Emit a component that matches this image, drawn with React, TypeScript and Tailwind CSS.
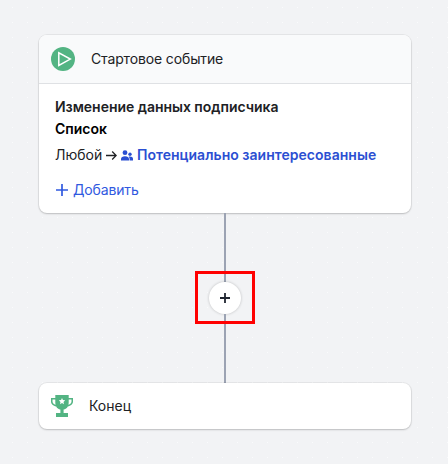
import type { ReactNode } from "react";

const cardClass =
  "w-[372px] shrink-0 overflow-hidden rounded-lg bg-white shadow-[0_0_0_1px_rgba(0,0,0,0.05),0_1px_2px_rgba(0,0,0,0.18)]";

function Card({ children }: { children: ReactNode }) {
  return <section className={cardClass}>{children}</section>;
}

function PlayIcon() {
  return (
    <svg className="size-6 shrink-0" viewBox="0 0 24 24" fill="none">
      <circle cx="12" cy="12" r="12" fill="#53b483" />
      <path d="M7.8 5.8v12.6L19.3 12.1z" stroke="#fff" strokeWidth="1.5" />
    </svg>
  );
}

function TrophyIcon() {
  return (
    <svg className="h-[22px] w-[22px] shrink-0" viewBox="0 0 22 22">
      <path
        fill="#53b483"
        fillRule="evenodd"
        d="M4.3 0h13.4v3H22v3.5c0 2.4-2.2 4.6-5.2 4.9-.9 1.7-2.400 2.700-4.200 3.100V18H17v4H5v-4h4.400v-3.500c-1.800-.4-3.300-1.400-4.200-3.100C2.200 11.100 0 8.900 0 6.500V3h4.300zM1.500 4.500v2c0 1.500 1.200 2.800 3.100 3.300-.2-.8-.3-1.600-.3-2.500V4.500zm19 0h-2.800v2.800c0 .9-.1 1.700-.3 2.500 1.900-.5 3.100-1.800 3.100-3.300z"
      />
      <path fill="#fff" d="m11 3 .95 2.1 2.25.25-1.68 1.53.47 2.25L11 8l-1.990 1.130.47-2.250L7.800 5.350l2.250-.25z" />
    </svg>
  );
}

function PeopleIcon() {
  return (
    <svg className="h-[11px] w-3 shrink-0" viewBox="0 0 12 11" fill="#2b4fd2">
      <circle cx="4" cy="2.7" r="2.4" />
      <circle cx="9" cy="4.2" r="1.7" />
      <path d="M0 10.500V9c0-1.700 1.700-2.700 4-2.700S8 7.300 8 9v1.500z" />
      <path d="M8.600 10.500V9c0-.9-.3-1.700-.9-2.300 2.200-.5 4.300.4 4.300 2v1.800z" />
    </svg>
  );
}

function Arrow() {
  return (
    <svg className="h-[11px] w-[11px] shrink-0" viewBox="0 0 11 11" fill="none" stroke="#202124" strokeWidth="1.3">
      <path d="M0 5.500h10M6.200 1.500l4 4-4 4" />
    </svg>
  );
}

export default function App() {
  return (
    <main className="flex h-[464px] w-[448px] flex-col items-center overflow-hidden bg-[#f2f3f5] bg-[radial-gradient(circle_at_center,#fafbfc_0.8px,transparent_1px)] bg-[length:15px_15px] bg-[position:5px_0px] pt-[35px] pl-0.5 font-['Inter','Liberation_Sans',sans-serif] text-sm text-[#202124]">
      <Card>
        <header className="flex h-[49px] items-center gap-4 border-b border-[#dfe1e4] bg-[#f9fafb] px-3">
          <PlayIcon />
          <span className="tracking-[-0.01em]">Стартовое событие</span>
        </header>
        <div className="flex h-[129px] flex-col px-4 pt-3 leading-[22px]">
          <div className="font-semibold tracking-[-0.002em]">Изменение данных подписчика</div>
          <div className="font-semibold text-black">Список</div>
          <div className="mt-1 flex items-center whitespace-nowrap">
            <span className="w-[50.5px]">Любой</span>
            <Arrow />
            <span className="ml-1 flex items-center gap-[4.5px] font-semibold text-[#2b4fd2]">
              <PeopleIcon />
              <span className="tracking-[0.002em]">Потенциально заинтересованные</span>
            </span>
          </div>
          <div className="mt-[13px] flex items-center gap-[5px] text-[#3059df]">
            <svg className="ml-px size-3" viewBox="0 0 12 12" stroke="currentColor" strokeWidth="1.7">
              <path d="M6 0v12M0 6h12" />
            </svg>
            <span className="tracking-[-0.01em]">Добавить</span>
          </div>
        </div>
      </Card>
      <div className="h-[58px] w-0.5 shrink-0 bg-[#9ca3b3]" />
      <div className="flex h-[53px] w-[60px] shrink-0 flex-col items-center border-[3px] border-[#ff0000]">
        <div className="h-2 w-0.5 shrink-0 bg-[#9ca3b3]" />
        <button className="flex size-8 shrink-0 items-center justify-center rounded-full bg-white shadow-[0_0_3px_rgba(0,0,0,0.22)]">
          <svg className="size-2.5" viewBox="0 0 10 10" stroke="#202631" strokeWidth="1.8">
            <path d="M5 0v10M0 5h10" />
          </svg>
        </button>
        <div className="w-0.5 flex-1 bg-[#9ca3b3]" />
      </div>
      <div className="h-[59px] w-0.5 shrink-0 bg-[#9ca3b3]" />
      <Card>
        <div className="flex h-[46px] items-center gap-4 px-3">
          <TrophyIcon />
          <span>Конец</span>
        </div>
      </Card>
    </main>
  );
}
